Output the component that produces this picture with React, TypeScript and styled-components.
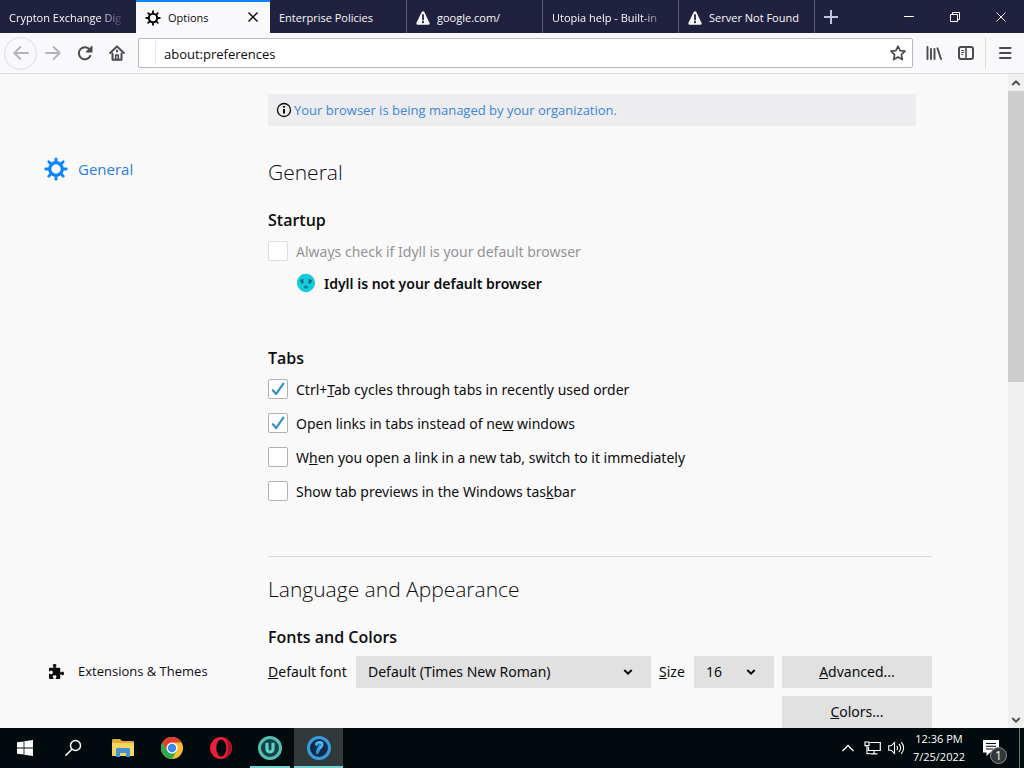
import React, { useState } from "react";
import styled, { createGlobalStyle, css } from "styled-components";

const GlobalStyle = createGlobalStyle`
  *, *::before, *::after { box-sizing: border-box; }
  body { margin: 0; background: #f9f9fa; color: #0c0c0d; font-family: "Open Sans", "Noto Sans", sans-serif; font-size: 14px; line-height: 20px; }
  button, input, select { font: inherit; color: inherit; }
  button { border: 0; padding: 0; background: none; }
  h1, h2, p { margin: 0; }
`;

/* ---------- window frame ---------- */

const Screen = styled.div`
  display: flex;
  flex-direction: column;
  height: 100vh;
  overflow: hidden;
`;

const TitleBar = styled.header`
  display: flex;
  flex: none;
  height: 33px;
  background: #20213f;
  color: #f9f9fa;
`;

const TabStrip = styled.div`
  display: flex;
  min-width: 0;
`;

const Tab = styled.div<{ $active?: boolean; $divided?: boolean }>`
  display: flex;
  align-items: center;
  gap: 7px;
  width: 136px;
  padding: 2px 12px 0 9px;
  font-size: 11px;
  border-left: ${(p) => (p.$divided ? "1px solid #5b5c74" : "0")};
  ${(p) =>
    p.$active &&
    css`
      width: 134px;
      padding-top: 0;
      background: #f9f9fb;
      color: #0c0c0d;
      border-top: 2px solid #0a84ff;
    `}
`;

const TabTitle = styled.button<{ $fade?: boolean }>`
  flex: 1;
  min-width: 0;
  overflow: hidden;
  white-space: nowrap;
  text-align: left;
  line-height: 20px;
  ${(p) =>
    p.$fade &&
    css`
      mask-image: linear-gradient(to left, transparent, #000 24px);
    `}
`;

const NewTab = styled.button`
  display: grid;
  place-items: center;
  width: 32px;
  border-left: 1px solid #5b5c74;
`;

const WindowControls = styled.div`
  display: flex;
  margin-left: auto;
`;

const WindowButton = styled.button`
  display: grid;
  place-items: center;
  width: 46px;
`;

const NavBar = styled.nav`
  display: flex;
  flex: none;
  align-items: center;
  height: 41px;
  padding-left: 4px;
  background: #f9f9fb;
  border-bottom: 1px solid #dcdcde;
  color: #4a4a4f;
`;

const ToolButton = styled.button<{ $muted?: boolean }>`
  display: grid;
  place-items: center;
  width: 32px;
  height: 32px;
  color: ${(p) => (p.$muted ? "#b4b4b6" : "inherit")};
`;

const BackButton = styled(ToolButton)`
  width: 33px;
  height: 33px;
  border: 1px solid #dcdcde;
  border-radius: 50%;
`;

const StarButton = styled(ToolButton)`
  width: 28px;
  height: 28px;
`;

const AddressBar = styled.div`
  display: flex;
  flex: 1;
  align-items: center;
  height: 30px;
  margin: 0 5px;
  background: #fff;
  border: 1px solid #b9b9bd;
  border-radius: 2px;
`;

const AddressInput = styled.input`
  flex: 1;
  min-width: 0;
  height: 24px;
  margin-left: 16px;
  padding: 2px 8px 0;
  border: 0;
  border-left: 1px solid #e6e6e8;
  outline: 0;
  background: none;
  color: #0c0c0d;
  font-size: 13px;
`;

const MenuSlot = styled.div`
  display: flex;
  justify-content: center;
  width: 39px;
  margin-left: 3px;
  border-left: 1px solid #dededf;
`;

/* ---------- preferences page ---------- */

const Page = styled.div`
  display: flex;
  flex: 1;
  min-height: 0;
`;

const Sidebar = styled.aside`
  display: flex;
  flex: none;
  flex-direction: column;
  justify-content: space-between;
  width: 268px;
  padding: 79px 0 41px 44px;
`;

const SideLink = styled.a<{ $active?: boolean }>`
  display: flex;
  align-items: center;
  gap: 10px;
  height: 32px;
  text-decoration: none;
  color: ${(p) => (p.$active ? "#2b7fdc" : "#0c0c0d")};
  font-size: ${(p) => (p.$active ? "15px" : "13px")};
`;

const SideIcon = styled.span`
  display: grid;
  place-items: center;
  width: 24px;
  height: 24px;
`;

const Main = styled.main`
  flex: 1;
  min-width: 0;
  overflow: hidden;
  padding-top: 20px;
  font-family: "Noto Sans", "Open Sans", sans-serif;
`;

const Pane = styled.div`
  max-width: 664px;
`;

const Notice = styled.div`
  display: flex;
  align-items: center;
  gap: 2px;
  height: 32px;
  margin: 0 16px 30px 0;
  padding-left: 8px;
  background: #ededf0;
  font-family: "Open Sans", "Noto Sans", sans-serif;
  font-size: 13px;

  a {
    color: #3b86d8;
    text-decoration: none;
  }
`;

const Title = styled.h1`
  margin-bottom: 20px;
  font-family: "Open Sans", "Noto Sans", sans-serif;
  font-size: 21px;
  font-weight: 300;
  line-height: 32px;
`;

const Heading = styled.h2`
  margin-bottom: 4px;
  font-family: "Open Sans", "Noto Sans", sans-serif;
  font-size: 16px;
  font-weight: 600;
  line-height: 24px;
`;

const Group = styled.section`
  margin-bottom: 48px;
`;

const Options = styled.div`
  display: grid;
  gap: 4px;
`;

const OptionLabel = styled.label<{ $disabled?: boolean }>`
  display: flex;
  align-items: center;
  gap: 8px;
  height: 30px;
  color: ${(p) => (p.$disabled ? "#949496" : "inherit")};
`;

const OptionText = styled.span`
  padding-top: 2px;
`;

const CheckSlot = styled.span`
  display: grid;
  width: 20px;
  height: 20px;

  > * {
    grid-area: 1 / 1;
  }
  svg {
    place-self: center;
    pointer-events: none;
  }
`;

const CheckInput = styled.input`
  appearance: none;
  width: 20px;
  height: 20px;
  margin: 0;
  background: #fff;
  border: 1px solid #b1b1b3;
  border-radius: 2px;

  &:disabled {
    border-color: #dcdcdd;
  }
`;

const BrowserStatus = styled.p`
  display: flex;
  align-items: center;
  gap: 8px;
  height: 30px;
  margin-top: 2px;
  padding-left: 28px;
  font-weight: 600;
`;

const Divider = styled.hr`
  margin: 50px 0 16px;
  border: 0;
  border-top: 1px solid #d7d7db;
`;

const FontGrid = styled.div`
  display: grid;
  grid-template-columns: 80px minmax(0, 1fr) 27px 80px 150px;
  gap: 8px;
  align-items: center;
  margin-top: 7px;
`;

const SelectBox = styled.span`
  display: grid;

  > * {
    grid-area: 1 / 1;
  }
  svg {
    place-self: center end;
    margin-right: 18px;
    pointer-events: none;
  }
`;

const SelectInput = styled.select`
  appearance: none;
  width: 100%;
  height: 32px;
  padding: 0 12px;
  border: 0;
  border-radius: 0;
  background: #e1e1e2;
`;

const PushButton = styled.button`
  grid-column: 5;
  height: 32px;
  background: #e1e1e2;
`;

const FieldLabel = styled.label`
  white-space: nowrap;
`;

const ScrollBar = styled.div`
  display: flex;
  flex: none;
  flex-direction: column;
  justify-content: space-between;
  width: 16px;
  background: #f0f0f0;
  color: #505050;
`;

const ScrollTrack = styled.div`
  flex: 1;
`;

const ScrollThumb = styled.div`
  height: 47%;
  background: #cdcdcd;
`;

const ScrollButton = styled.button`
  display: grid;
  place-items: center;
  height: 17px;
`;

/* ---------- task bar ---------- */

const TaskBar = styled.footer`
  display: flex;
  flex: none;
  height: 40px;
  background: #010a0c;
  color: #fff;
`;

const TaskButton = styled.button<{ $running?: boolean; $focused?: boolean }>`
  display: grid;
  place-items: center;
  width: 49px;
  background: ${(p) => (p.$focused ? "#32393b" : "none")};
  ${(p) =>
    p.$running &&
    css`
      background-image: linear-gradient(#76cfd0, #76cfd0);
      background-repeat: no-repeat;
      background-position: center bottom;
      background-size: ${p.$focused ? "100%" : "40px"} 2px;
    `}
`;

const Tray = styled.div`
  display: flex;
  align-items: center;
  margin-left: auto;
`;

const TrayButton = styled.button`
  display: grid;
  place-items: center;
  width: 24px;
  height: 40px;
`;

const Clock = styled.button`
  display: block;
  width: 62px;
  font-size: 11px;
  line-height: 18px;
  white-space: nowrap;
`;

const ActionCenter = styled.button`
  position: relative;
  display: grid;
  place-items: center;
  width: 49px;
  height: 40px;
  padding-right: 7px;
`;

const CountBadge = styled.span`
  position: absolute;
  right: 12px;
  bottom: 4px;
  width: 17px;
  height: 17px;
  border: 1px solid #8a8f90;
  border-radius: 50%;
  background: #33393b;
  font-size: 12px;
  line-height: 15px;
`;

const DesktopEdge = styled.button`
  width: 5px;
  height: 40px;
  border-left: 1px solid #6a7071;
`;

/* ---------- icons ---------- */

const Gear = ({ size, color }: { size: number; color: string }) => (
  <svg width={size} height={size} viewBox="0 0 24 24" fill="none" stroke={color}>
    <circle cx="12" cy="12" r="6.3" strokeWidth="3.2" />
    {[0, 45, 90, 135, 180, 225, 270, 315].map((a) => (
      <path key={a} d="M12 4.500V1.800" strokeWidth="2.800" strokeLinecap="round" transform={`rotate(${a} 12 12)`} />
    ))}
  </svg>
);

const Warning = () => (
  <svg width="14" height="14" viewBox="0 0 14 14">
    <path d="M7 .3c.6 0 1 .3 1.300.8l5.200 10.700c.5 1-.1 2-1.200 2H1.700c-1.100 0-1.700-1-1.200-2L5.700 1.100C6 .6 6.400.3 7 .3z" fill="#f9f9fa" />
    <path d="M7 4v4.500" stroke="#20213f" strokeWidth="1.800" strokeLinecap="round" />
    <circle cx="7" cy="11.200" r="1.100" fill="#20213f" />
  </svg>
);

const Cross = ({ size, width }: { size: number; width: number }) => (
  <svg width={size} height={size} viewBox="0 0 10 10" stroke="currentColor" strokeWidth={width}>
    <path d="M.5.5l9 9M9.500.5l-9 9" />
  </svg>
);

const Arrow = ({ flip }: { flip?: boolean }) => (
  <svg width="16" height="16" viewBox="0 0 16 16" fill="none" stroke="currentColor" strokeWidth="1.800" strokeLinecap="round" strokeLinejoin="round">
    <path d="M15 8H1.500M7.300 2L1.300 8l6 6" transform={flip ? "rotate(180 8 8)" : undefined} />
  </svg>
);

const Reload = () => (
  <svg width="16" height="16" viewBox="0 0 16 16">
    <path d="M12.600 4.600A6 6 0 1 0 13.300 10.800" fill="none" stroke="currentColor" strokeWidth="2" strokeLinecap="round" />
    <path d="M15.500 1.300v5.600c0 .4-.2.600-.6.600H9.400c-.5 0-.7-.5-.4-.9L14.600.9c.4-.3.900-.1.900.4z" fill="currentColor" />
  </svg>
);

const Home = () => (
  <svg width="16" height="16" viewBox="0 0 16 16" fill="none" stroke="currentColor" strokeWidth="2" strokeLinecap="round" strokeLinejoin="round">
    <path d="M1.200 8L8 1.400 14.800 8" />
    <path d="M3.500 8.500V14.800h9V8.500" />
    <path d="M6.700 14.500V10h2.600v4.500" strokeWidth="1.600" />
    <path d="M8 5.600v1" />
  </svg>
);

const Star = () => (
  <svg width="16" height="16" viewBox="0 0 16 16" fill="none" stroke="currentColor" strokeWidth="1.700" strokeLinejoin="round">
    <path d="M8 1.200l2.100 4.400 4.900.6-3.600 3.400.9 4.900L8 12.100l-4.300 2.400.9-4.900L1 6.200l4.900-.6z" />
  </svg>
);

const Library = () => (
  <svg width="16" height="16" viewBox="0 0 16 16" fill="none" stroke="currentColor" strokeWidth="1.900" strokeLinecap="round">
    <path d="M1.500 2v12M5 4v10M8.500 4v10M11.500 3.300L15 14" />
  </svg>
);

const SidebarIcon = () => (
  <svg width="16" height="16" viewBox="0 0 16 16" fill="none" stroke="currentColor">
    <rect x="1" y="2" width="14" height="12" rx="2" strokeWidth="2" />
    <path d="M8 2v12" strokeWidth="1.600" />
    <path d="M3.200 5.500h3M3.200 7.500h3M3.200 9.500h2" />
  </svg>
);

const Hamburger = () => (
  <svg width="14" height="14" viewBox="0 0 14 14" stroke="currentColor" strokeWidth="2" strokeLinecap="round">
    <path d="M2 2h10.500M2 7h10.500M2 12h10.500" />
  </svg>
);

const Info = () => (
  <svg width="16" height="16" viewBox="0 0 16 16" fill="none" stroke="#0c0c0d">
    <circle cx="8" cy="8" r="6.500" strokeWidth="1.300" />
    <path d="M8 7v4.600" strokeWidth="2" />
    <circle cx="8" cy="4.800" r="1.100" fill="#0c0c0d" stroke="none" />
  </svg>
);

const Puzzle = () => (
  <svg width="15" height="15" viewBox="0 0 16 16" fill="currentColor">
    <path d="M14.500 8c-.971 0-1 1-1.750 1a.765.765 0 0 1-.75-.75V5a1 1 0 0 0-1-1H7.750A.765.765 0 0 1 7 3.250c0-.75 1-.779 1-1.750C8 .635 7.100 0 6 0S4 .635 4 1.500c0 .971 1 1 1 1.750a.765.765 0 0 1-.75.75H1a1 1 0 0 0-1 1v2.250A.765.765 0 0 0 .75 8c.75 0 .779-1 1.750-1C3.365 7 4 7.900 4 9s-.635 2-1.500 2c-.971 0-1-1-1.750-1a.765.765 0 0 0-.75.750V15a1 1 0 0 0 1 1h3.250a.765.765 0 0 0 .75-.75c0-.75-1-.779-1-1.750 0-.865.9-1.500 2-1.500s2 .635 2 1.500c0 .971-1 1-1 1.750a.765.765 0 0 0 .75.750H11a1 1 0 0 0 1-1v-3.250a.765.765 0 0 1 .75-.75c.75 0 .779 1 1.750 1 .865 0 1.500-.9 1.500-2s-.635-2-1.500-2z" />
  </svg>
);

const Face = () => (
  <svg width="20" height="20" viewBox="0 0 20 20">
    <path
      d="M10 .8c3 0 4.400 1 6 2.400S19 7 19 10s-1.200 4.800-2.700 6.300S13 19.200 10 19.200 5.200 18 3.700 16.300 1 13 1 10s1.200-5 2.800-6.700S7 .8 10 .8z"
      fill="#12cbdc"
    />
    <path d="M4.400 7.600l2.600-1M15.600 7.600l-2.600-1" stroke="#0a6f86" strokeWidth="1.300" strokeLinecap="round" />
    <ellipse cx="6.200" cy="9" rx="1.500" ry="1.700" fill="#0b5f78" />
    <ellipse cx="13.800" cy="9" rx="1.500" ry="1.700" fill="#0b5f78" />
    <ellipse cx="10" cy="14" rx="2" ry="1.500" fill="#0a7d94" />
  </svg>
);

const Tick = () => (
  <svg width="14" height="14" viewBox="0 0 14 14" fill="none" stroke="#2f8fc8" strokeWidth="2.200" strokeLinecap="round" strokeLinejoin="round">
    <path d="M1.800 8.200l3.400 3.800L12.300 1.600" />
  </svg>
);

const Chevron = ({ up }: { up?: boolean }) => (
  <svg width="10" height="10" viewBox="0 0 10 10" fill="none" stroke="currentColor" strokeWidth="2">
    <path d="M1.300 3L5 6.700 8.700 3" transform={up ? "rotate(180 5 5)" : undefined} />
  </svg>
);

const WindowsLogo = () => (
  <svg width="16" height="16" viewBox="0 0 16 16" fill="#fff">
    <path d="M0 2.300L6.600 1.400v6.200H0zM7.400 1.300L16 0v7.600H7.400zM0 8.400h6.600v6.200L0 13.700zM7.400 8.400H16V16l-8.600-1.300z" />
  </svg>
);

const SearchIcon = () => (
  <svg width="18" height="18" viewBox="0 0 18 18" fill="none" stroke="#fff" strokeWidth="1.500">
    <circle cx="10.500" cy="6.500" r="5" />
    <path d="M6.900 10.200L.5 16.600" />
  </svg>
);

const Folder = () => (
  <svg width="22" height="20" viewBox="0 0 22 20">
    <path d="M0 2.500C0 1.700.6 1 1.400 1H8l2 2h10.800c.7 0 1.200.5 1.200 1.200V18H0z" fill="#e3a93b" />
    <path d="M0 5h22v13H0z" fill="#f8d366" />
    <path d="M4 11.500c0-.8.6-1.500 1.400-1.500h11.200c.8 0 1.400.7 1.400 1.500V19h-4v-4H8v4H4z" fill="#3f93cf" />
  </svg>
);

const Chrome = () => (
  <svg width="22" height="22" viewBox="0 0 22 22">
    <circle cx="11" cy="11" r="11" fill="#fbc02d" />
    <path d="M1.500 5.500A11 11 0 0 0 11 22l4.800-8.200L6.200 13.800z" fill="#2da94f" />
    <path d="M1.500 5.500A11 11 0 0 1 20.500 5.500H11L6.200 13.800z" fill="#e33b2e" />
    <circle cx="11" cy="11" r="5.500" fill="#fff" />
    <circle cx="11" cy="11" r="4.200" fill="#4285f4" />
  </svg>
);

const Opera = () => (
  <svg width="22" height="22" viewBox="0 0 22 22">
    <circle cx="11" cy="11" r="11" fill="#e8203a" />
    <path d="M14 .5A11 11 0 0 1 14 21.500C17 19 18 15 18 11S17 3 14 .5z" fill="#a80f22" />
    <ellipse cx="11.300" cy="11" rx="5" ry="8.600" fill="#010a0c" />
  </svg>
);

const Utopia = () => (
  <svg width="24" height="24" viewBox="0 0 24 24" fill="none">
    <circle cx="12" cy="12" r="10.500" fill="#11434a" stroke="#58bfb0" strokeWidth="3" />
    <path d="M9 6.800v6.200a3 3 0 0 0 6 0V6.800" stroke="#5fd3c0" strokeWidth="3.200" />
  </svg>
);

const Idyll = () => (
  <svg width="24" height="24" viewBox="0 0 24 24" fill="none">
    <circle cx="12" cy="12" r="10.500" fill="#0b2c4b" stroke="#3a9cdc" strokeWidth="3" />
    <path d="M9.500 8.500c0-2.200 5.200-3.200 5.700-.2.300 2-2.200 3.200-3.500 5" stroke="#4fb6ee" strokeWidth="2.800" strokeLinecap="round" />
    <path d="M12.600 8.800c-.3 3-3.600 4-2.600 8.400 1.500-.6 2-2 1.800-4" stroke="#3b95d8" strokeWidth="1.800" strokeLinecap="round" />
  </svg>
);

const Network = () => (
  <svg width="17" height="14" viewBox="0 0 17 14" fill="none" stroke="#fff" strokeWidth="1.200">
    <path d="M5.500 1.500h10.800v8H4.500V6M10 9.500v3.200M6.500 12.900h7" />
    <path d="M1 1h4v3.700H1zM3 4.700v8h3" />
  </svg>
);

const Speaker = () => (
  <svg width="17" height="14" viewBox="0 0 17 14" fill="none" stroke="#fff" strokeWidth="1.100">
    <path d="M.7 4.800h2.500L6.500 1.500v11L3.200 9.200H.7z" />
    <path d="M8.600 4.800a3 3 0 0 1 0 4.400M10.900 3a5.500 5.500 0 0 1 0 8M13.200 1.200a8.200 8.200 0 0 1 0 11.600" />
  </svg>
);

const Message = () => (
  <svg width="16" height="16" viewBox="0 0 16 16">
    <path d="M0 0h16v12.500H7L3.500 16v-3.500H0z" fill="#fff" />
    <path d="M3 3.500h10M3 6.200h10M3 9h7" stroke="#010a0c" strokeWidth="1.100" />
  </svg>
);

/* ---------- building blocks ---------- */

interface CheckOptionProps {
  children: React.ReactNode;
  initial?: boolean;
  disabled?: boolean;
}

function CheckOption({ children, initial = false, disabled }: CheckOptionProps) {
  const [checked, setChecked] = useState(initial);
  return (
    <OptionLabel $disabled={disabled}>
      <CheckSlot>
        <CheckInput type="checkbox" checked={checked} disabled={disabled} onChange={(e) => setChecked(e.target.checked)} />
        {checked && <Tick />}
      </CheckSlot>
      <OptionText>{children}</OptionText>
    </OptionLabel>
  );
}

function SelectField({ id, value }: { id: string; value: string }) {
  return (
    <SelectBox>
      <SelectInput id={id} defaultValue={value}>
        <option>{value}</option>
      </SelectInput>
      <Chevron />
    </SelectBox>
  );
}

export default function App() {
  return (
    <Screen>
      <GlobalStyle />
      <TitleBar>
        <TabStrip>
          <Tab>
            <TabTitle $fade>Crypton Exchange Dig</TabTitle>
          </Tab>
          <Tab $active>
            <Gear size={16} color="#0c0c0d" />
            <TabTitle>Options</TabTitle>
            <button aria-label="Close tab">
              <Cross size={10} width={1.4} />
            </button>
          </Tab>
          <Tab>
            <TabTitle>Enterprise Policies</TabTitle>
          </Tab>
          <Tab $divided>
            <Warning />
            <TabTitle>google.com/</TabTitle>
          </Tab>
          <Tab $divided>
            <TabTitle $fade>Utopia help - Built-in</TabTitle>
          </Tab>
          <Tab $divided>
            <Warning />
            <TabTitle>Server Not Found</TabTitle>
          </Tab>
          <NewTab aria-label="New tab">
            <svg width="14" height="14" viewBox="0 0 14 14" stroke="#c3c4e0" strokeWidth="2">
              <path d="M7 0v14M0 7h14" />
            </svg>
          </NewTab>
        </TabStrip>
        <WindowControls>
          <WindowButton aria-label="Minimize">
            <svg width="10" height="10" viewBox="0 0 10 10" stroke="#fff">
              <path d="M0 4.500h10" />
            </svg>
          </WindowButton>
          <WindowButton aria-label="Restore">
            <svg width="10" height="10" viewBox="0 0 10 10" fill="none" stroke="#fff">
              <path d="M.5 2.500h7v7h-7zM2.500 2.500v-2h7v7h-2" />
            </svg>
          </WindowButton>
          <WindowButton aria-label="Close">
            <Cross size={10} width={1} />
          </WindowButton>
        </WindowControls>
      </TitleBar>

      <NavBar>
        <BackButton $muted aria-label="Back">
          <Arrow />
        </BackButton>
        <ToolButton $muted aria-label="Forward">
          <Arrow flip />
        </ToolButton>
        <ToolButton aria-label="Reload">
          <Reload />
        </ToolButton>
        <ToolButton aria-label="Home">
          <Home />
        </ToolButton>
        <AddressBar>
          <AddressInput aria-label="Address" defaultValue="about:preferences" />
          <StarButton aria-label="Bookmark this page">
            <Star />
          </StarButton>
        </AddressBar>
        <ToolButton aria-label="Library">
          <Library />
        </ToolButton>
        <ToolButton aria-label="Sidebars">
          <SidebarIcon />
        </ToolButton>
        <MenuSlot>
          <ToolButton aria-label="Open menu">
            <Hamburger />
          </ToolButton>
        </MenuSlot>
      </NavBar>

      <Page>
        <Sidebar>
          <SideLink href="#general" $active>
            <SideIcon>
              <Gear size={24} color="#0a84ff" />
            </SideIcon>
            General
          </SideLink>
          <SideLink href="#extensions">
            <SideIcon>
              <Puzzle />
            </SideIcon>
            Extensions &amp; Themes
          </SideLink>
        </Sidebar>

        <Main>
          <Pane>
            <Notice>
              <Info />
              <a href="#policies">Your browser is being managed by your organization.</a>
            </Notice>

            <Title>General</Title>
            <Group>
              <Heading>Startup</Heading>
              <CheckOption disabled>
                Alwa<u>y</u>s check if Idyll is your default browser
              </CheckOption>
              <BrowserStatus>
                <Face />
                <OptionText>Idyll is not your default browser</OptionText>
              </BrowserStatus>
            </Group>

            <section>
              <Heading>Tabs</Heading>
              <Options>
                <CheckOption initial>
                  Ctrl+<u>T</u>ab cycles through tabs in recently used order
                </CheckOption>
                <CheckOption initial>
                  Open links in tabs instead of ne<u>w</u> windows
                </CheckOption>
                <CheckOption>
                  W<u>h</u>en you open a link in a new tab, switch to it immediately
                </CheckOption>
                <CheckOption>
                  Show tab previews in the Windows tas<u>k</u>bar
                </CheckOption>
              </Options>
            </section>

            <Divider />

            <Title>Language and Appearance</Title>
            <section>
              <Heading>Fonts and Colors</Heading>
              <FontGrid>
                <FieldLabel htmlFor="default-font">
                  <u>D</u>efault font
                </FieldLabel>
                <SelectField id="default-font" value="Default (Times New Roman)" />
                <FieldLabel htmlFor="font-size">
                  <u>S</u>ize
                </FieldLabel>
                <SelectField id="font-size" value="16" />
                <PushButton>
                  <u>A</u>dvanced...
                </PushButton>
                <PushButton>
                  <u>C</u>olors...
                </PushButton>
              </FontGrid>
            </section>
          </Pane>
        </Main>

        <ScrollBar>
          <ScrollButton aria-label="Scroll up">
            <Chevron up />
          </ScrollButton>
          <ScrollTrack>
            <ScrollThumb />
          </ScrollTrack>
          <ScrollButton aria-label="Scroll down">
            <Chevron />
          </ScrollButton>
        </ScrollBar>
      </Page>

      <TaskBar>
        <TaskButton aria-label="Start">
          <WindowsLogo />
        </TaskButton>
        <TaskButton aria-label="Search">
          <SearchIcon />
        </TaskButton>
        <TaskButton aria-label="File Explorer">
          <Folder />
        </TaskButton>
        <TaskButton aria-label="Chrome">
          <Chrome />
        </TaskButton>
        <TaskButton aria-label="Opera">
          <Opera />
        </TaskButton>
        <TaskButton $running aria-label="Utopia">
          <Utopia />
        </TaskButton>
        <TaskButton $running $focused aria-label="Idyll">
          <Idyll />
        </TaskButton>
        <Tray>
          <TrayButton aria-label="Show hidden icons">
            <svg width="12" height="8" viewBox="0 0 12 8" fill="none" stroke="#fff" strokeWidth="1.300">
              <path d="M.5 7L6 1.500 11.500 7" />
            </svg>
          </TrayButton>
          <TrayButton aria-label="Network">
            <Network />
          </TrayButton>
          <TrayButton aria-label="Volume">
            <Speaker />
          </TrayButton>
          <Clock>
            12:36 PM
            <br />
            7/25/2022
          </Clock>
          <ActionCenter aria-label="Notifications">
            <Message />
            <CountBadge>1</CountBadge>
          </ActionCenter>
          <DesktopEdge aria-label="Show desktop" />
        </Tray>
      </TaskBar>
    </Screen>
  );
}
